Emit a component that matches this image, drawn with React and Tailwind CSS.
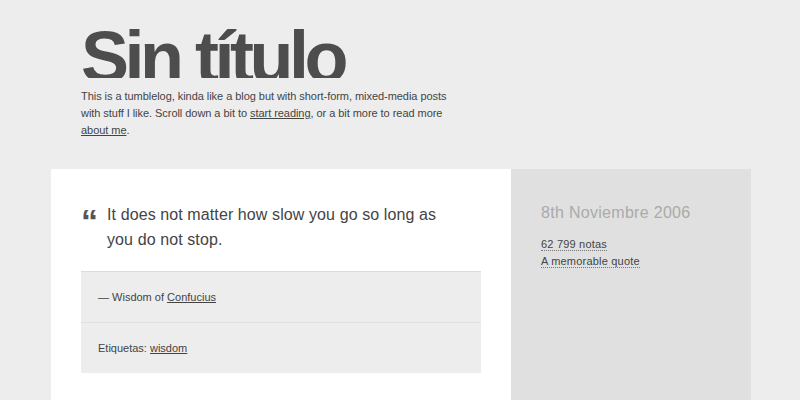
import React from "react";

function Header() {
  return (
    <div className="pl-[81px] pt-[18px]">
      <h1 className="h-[60px] overflow-hidden pt-[3px] text-[72px] leading-[72px] font-bold tracking-[-4.5px] text-[#4d4d4d]">
        Sin título
      </h1>
      <p className="mt-[10px] whitespace-nowrap text-[11px] leading-[17px] tracking-[-0.05px] text-[#444]">
        This is a tumblelog, kinda like a blog but with short-form, mixed-media posts
        <br />
        with stuff I like. Scroll down a bit to{" "}
        <a className="underline">start reading</a>, or a bit more to read more
        <br />
        <a className="underline">about me</a>.
      </p>
    </div>
  );
}

function Post() {
  return (
    <div className="flex w-[700px] ml-[51px] mt-[30px]">
      <div className="w-[460px] bg-white px-[30px] pt-[33px] pb-[30px]">
        <div className="flex gap-[10px]">
          <span className="text-[34px] leading-[30px] font-bold text-[#555] tracking-[-1px] pt-[4px]">“</span>
          <p className="text-[16px] leading-[25px] text-[#444] tracking-[0.1px] whitespace-nowrap">
            It does not matter how slow you go so long as
            <br />
            you do not stop.
          </p>
        </div>
        <div className="mt-[19px] bg-[#ededed] border-t border-[#dcdcdc] text-[11px] text-[#444]">
          <div className="px-[17px] h-[51px] flex items-center border-b border-[#e0e0e0]">
            — Wisdom of&nbsp;<a className="underline">Confucius</a>
          </div>
          <div className="px-[17px] h-[50px] flex items-center">
            Etiquetas:&nbsp;<a className="underline">wisdom</a>
          </div>
        </div>
      </div>
      <div className="w-[240px] bg-[#e0e0e0] px-[30px] pt-[34px]">
        <div className="text-[16px] text-[#aaa] leading-[20px] tracking-[0.3px]">8th Noviembre 2006</div>
        <div className="mt-[13px] text-[11px] leading-[17px] text-[#444] tracking-[0.2px]">
          <div><a className="border-b border-dotted border-[#777]">62 799 notas</a></div>
          <div><a className="border-b border-dotted border-[#777]">A memorable quote</a></div>
        </div>
      </div>
    </div>
  );
}

export default function App() {
  return (
    <div className="h-[400px] overflow-hidden bg-[#ededed] font-['Liberation_Sans',Arial,sans-serif]">
      <Header />
      <Post />
    </div>
  );
}
